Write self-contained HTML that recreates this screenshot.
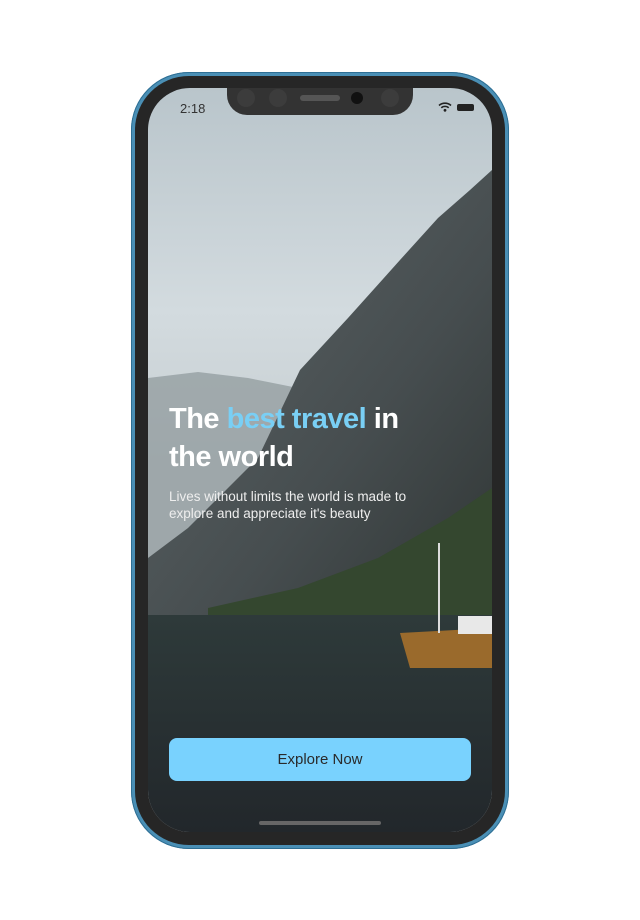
<!DOCTYPE html>
<html><head><meta charset="utf-8"><style>
html,body{margin:0;padding:0;background:#fff;width:640px;height:920px;overflow:hidden;font-family:"Liberation Sans",sans-serif}
.frame{position:absolute;left:131px;top:72px;width:378px;height:777px;border-radius:58px;background:#4a8fb5;box-shadow:inset 0 0 0 1px #2f6f94}
.bezel{position:absolute;left:135px;top:76px;width:370px;height:769px;border-radius:54px;background:#262626}
.screen{position:absolute;left:148px;top:88px;width:344px;height:744px;border-radius:42px;overflow:hidden;background:#2a2f33}
.notch{position:absolute;left:227px;top:88px;width:186px;height:27px;background:#333;border-radius:0 0 20px 20px}
.t{position:absolute;color:#fff}
</style></head><body>
<div class="frame"></div><div class="bezel"></div>
<div class="screen">
<svg width="344" height="744" viewBox="0 0 344 744" style="position:absolute;left:0;top:0">
<defs>
<linearGradient id="sky" x1="0" y1="0" x2="0" y2="1"><stop offset="0" stop-color="#b9c5cb"/><stop offset="0.3" stop-color="#d3dbdf"/><stop offset="0.5" stop-color="#c6ced1"/></linearGradient>
<linearGradient id="mt" x1="0" y1="0" x2="1" y2="1"><stop offset="0" stop-color="#5f6769"/><stop offset="0.6" stop-color="#464d4f"/><stop offset="1" stop-color="#2f3534"/></linearGradient>
<linearGradient id="wt" x1="0" y1="0" x2="0" y2="1"><stop offset="0" stop-color="#2e3a3a"/><stop offset="1" stop-color="#22272b"/></linearGradient>
</defs>
<rect width="344" height="744" fill="url(#sky)"/>
<path d="M0 290 L50 284 L100 290 L150 300 L150 540 L0 540 Z" fill="#8d979a" opacity="0.7"/>
<path d="M0 470 L40 440 L110 370 L152 282 L200 230 L252 172 L290 130 L322 102 L344 82 L344 540 L0 535 Z" fill="url(#mt)"/>
<path d="M60 520 L150 500 L230 470 L300 430 L344 400 L344 530 L60 530 Z" fill="#34472f"/>
<rect y="527" width="344" height="217" fill="url(#wt)"/>
<path d="M252 545 L344 540 L344 580 L262 580 Z" fill="#9a6a2c"/>
<rect x="290" y="455" width="2" height="90" fill="#ddd"/>
<rect x="310" y="528" width="34" height="18" fill="#e8e8e8"/>
</svg>
<div class="t" style="left:32px;top:13px;font-size:13px;color:#333">2:18</div>
<div style="position:absolute;left:309px;top:16px;width:17px;height:7px;background:#222;border-radius:2px"></div>
<svg style="position:absolute;left:290px;top:14px" width="14" height="10" viewBox="0 0 14 10"><path d="M1 3.5A9 9 0 0 1 13 3.5M3.3 5.8A5.5 5.5 0 0 1 10.7 5.8" stroke="#222" stroke-width="1.6" fill="none"/><circle cx="7" cy="8.3" r="1.4" fill="#222"/></svg>
<div class="t" style="left:21px;top:312px;font-size:29px;font-weight:bold;line-height:38px;letter-spacing:-0.5px">The <span style="color:#79cff5">best travel</span> in<br>the world</div>
<div class="t" style="left:21px;top:400px;font-size:13.5px;line-height:17px;color:#eee">Lives without limits the world is made to<br>explore and appreciate it's beauty</div>
<div style="position:absolute;left:21px;top:650px;width:302px;height:43px;background:#79d2fe;border-radius:8px;text-align:center;line-height:43px;font-size:15px;color:#2a2a2a">Explore Now</div>
<div style="position:absolute;left:111px;top:733px;width:122px;height:4px;background:#666;border-radius:2px"></div>
</div>
<div class="notch"></div>
<div style="position:absolute;left:237px;top:89px;width:18px;height:18px;border-radius:50%;background:#3c3c3c"></div>
<div style="position:absolute;left:269px;top:89px;width:18px;height:18px;border-radius:50%;background:#3c3c3c"></div>
<div style="position:absolute;left:300px;top:95px;width:40px;height:6px;border-radius:3px;background:#555"></div>
<div style="position:absolute;left:351px;top:92px;width:12px;height:12px;border-radius:50%;background:#111"></div>
<div style="position:absolute;left:381px;top:89px;width:18px;height:18px;border-radius:50%;background:#3c3c3c"></div>
</body></html>
